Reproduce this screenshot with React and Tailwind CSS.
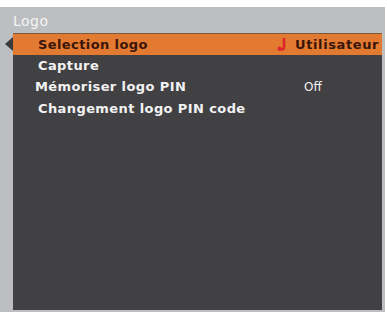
import React from "react";

const items = [
  { label: "Selection logo", value: "Utilisateur", selected: true },
  { label: "Capture" },
  { label: "Mémoriser logo PIN", value: "Off", shift: true },
  { label: "Changement logo PIN code" },
];

// small red "enter" hook shown before the selected value
const ReturnMark = () => (
  <svg width="10" height="13" viewBox="0 0 10 13" className="mr-[8px]">
    <path d="M7 1 V9 Q7 11.5 4.5 11.5 H2" stroke="#e0262a" strokeWidth="2.6" fill="none" strokeLinecap="round" />
    <circle cx="2.5" cy="10.5" r="2" fill="#e0262a" />
  </svg>
);

export default function App() {
  return (
    <div className="w-[387px] h-[312px] bg-white pt-[7px] pr-[2px] font-['DejaVu_Sans',sans-serif]">
      <div className="h-full bg-[#bdbec0] flex flex-col pl-[13px] pr-[3px] pb-[2px]">
        {/* title */}
        <div className="h-[26px] pt-[3px] flex items-center text-[#f4f4f4] text-[14px] tracking-[0.5px]">Logo</div>
        <div className="flex-1 bg-[#414043] flex flex-col relative">
          {/* left pointer */}
          <div className="absolute left-[-8px] top-[4px] w-0 h-0 border-y-[7px] border-y-transparent border-r-[8px] border-r-[#3a3a3c]" />
          {items.map((it) => (
            <div
              key={it.label}
              className={`h-[21.5px] flex items-center text-[13px] font-bold tracking-[0.4px] ${
                it.selected ? "bg-[#e27a32] text-[#3b1508] border-t border-[#7a5a40]" : "text-[#f2f2f2]"
              } ${it.shift ? "pl-[22px]" : "pl-[25px]"}`}
            >
              <span className="flex-1">{it.label}</span>
              {it.selected && (
                <span className="flex items-center pr-[3px] tracking-[0.6px]">
                  <ReturnMark />
                  {it.value}
                </span>
              )}
              {!it.selected && it.value && (
                <span className="w-[78px] font-normal text-[12px] tracking-normal">{it.value}</span>
              )}
            </div>
          ))}
        </div>
      </div>
    </div>
  );
}
